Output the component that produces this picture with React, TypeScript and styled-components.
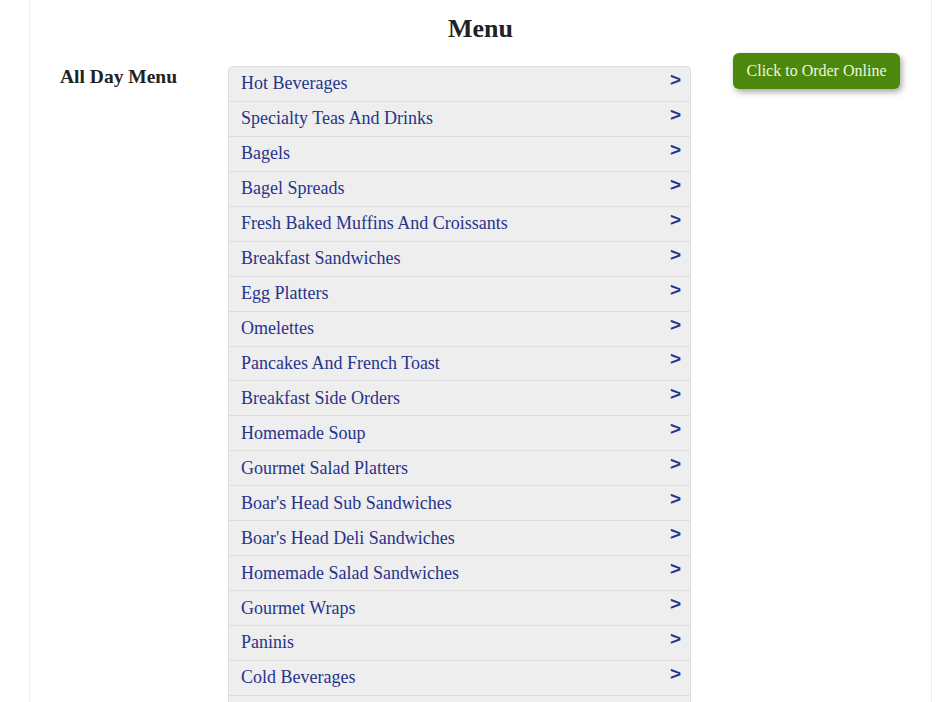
import React from "react"
import styled, { createGlobalStyle } from "styled-components"

const categories = [
  "Hot Beverages",
  "Specialty Teas And Drinks",
  "Bagels",
  "Bagel Spreads",
  "Fresh Baked Muffins And Croissants",
  "Breakfast Sandwiches",
  "Egg Platters",
  "Omelettes",
  "Pancakes And French Toast",
  "Breakfast Side Orders",
  "Homemade Soup",
  "Gourmet Salad Platters",
  "Boar's Head Sub Sandwiches",
  "Boar's Head Deli Sandwiches",
  "Homemade Salad Sandwiches",
  "Gourmet Wraps",
  "Paninis",
  "Cold Beverages",
  "Desserts",
]

export default function App() {
  return (
    <>
      <GlobalStyle />
      <Page>
        <Title>Menu</Title>
        <Layout>
          <SectionName>All Day Menu</SectionName>
          <CategoryList>
            {categories.map((name) => (
              <CategoryRow key={name}>
                <CategoryLink href="#">{name}</CategoryLink>
                <Chevron>&gt;</Chevron>
              </CategoryRow>
            ))}
          </CategoryList>
          <OrderColumn>
            <OrderButton type="button">Click to Order Online</OrderButton>
          </OrderColumn>
        </Layout>
      </Page>
    </>
  )
}

const GlobalStyle = createGlobalStyle`
  html, body {
    margin: 0;
    background: #fff;
    font-family: "Liberation Serif", "Times New Roman", serif;
  }
`

const Page = styled.div`
  margin-left: 29px;
  width: 901px;
  min-height: 702px;
  border-left: 1px solid #eeeeee;
  border-right: 1px solid #eeeeee;
`

const Title = styled.h1`
  margin: 0;
  padding-top: 12px;
  font-size: 26px;
  line-height: 34px;
  font-weight: bold;
  color: #222;
  text-align: center;
`

const Layout = styled.div`
  display: grid;
  grid-template-columns: 168px 463px 167px;
  padding: 7px 0 0 30px;
  align-items: start;
`

const SectionName = styled.h2`
  margin: 13px 0 0;
  font-size: 19.5px;
  line-height: 22px;
  font-weight: bold;
  color: #222;
`

const CategoryList = styled.div`
  margin-top: 13px;
  border: 1px solid #dddddd;
  border-bottom: none;
  border-radius: 5px 5px 0 0;
  background: #eeeeee;
  overflow: hidden;
`

const CategoryRow = styled.div`
  display: flex;
  align-items: center;
  justify-content: space-between;
  height: 34.94px;
  padding: 0 9px 0 12px;
  box-sizing: border-box;
  border-top: 1px solid #dddddd;

  &:first-child {
    border-top: none;
    height: 33.94px;
  }
`

const CategoryLink = styled.a`
  font-size: 18px;
  color: #27348b;
  text-decoration: none;
`

const Chevron = styled.span`
  margin-bottom: 8px;
  font-family: "Liberation Sans", Arial, sans-serif;
  font-weight: bold;
  font-size: 19px;
  color: #27348b;
`

const OrderColumn = styled.div`
  padding-left: 42px;
  width: 167px;
`

const OrderButton = styled.button`
  display: block;
  width: 167px;
  height: 36px;
  padding: 0 12px;
  border: none;
  border-radius: 6px;
  background: #4b880b;
  color: #eef7e0;
  font-family: "Liberation Serif", "Times New Roman", serif;
  font-size: 16px;
  white-space: nowrap;
  box-shadow: 2px 3px 6px rgba(0, 0, 0, 0.35);
  cursor: pointer;
`
